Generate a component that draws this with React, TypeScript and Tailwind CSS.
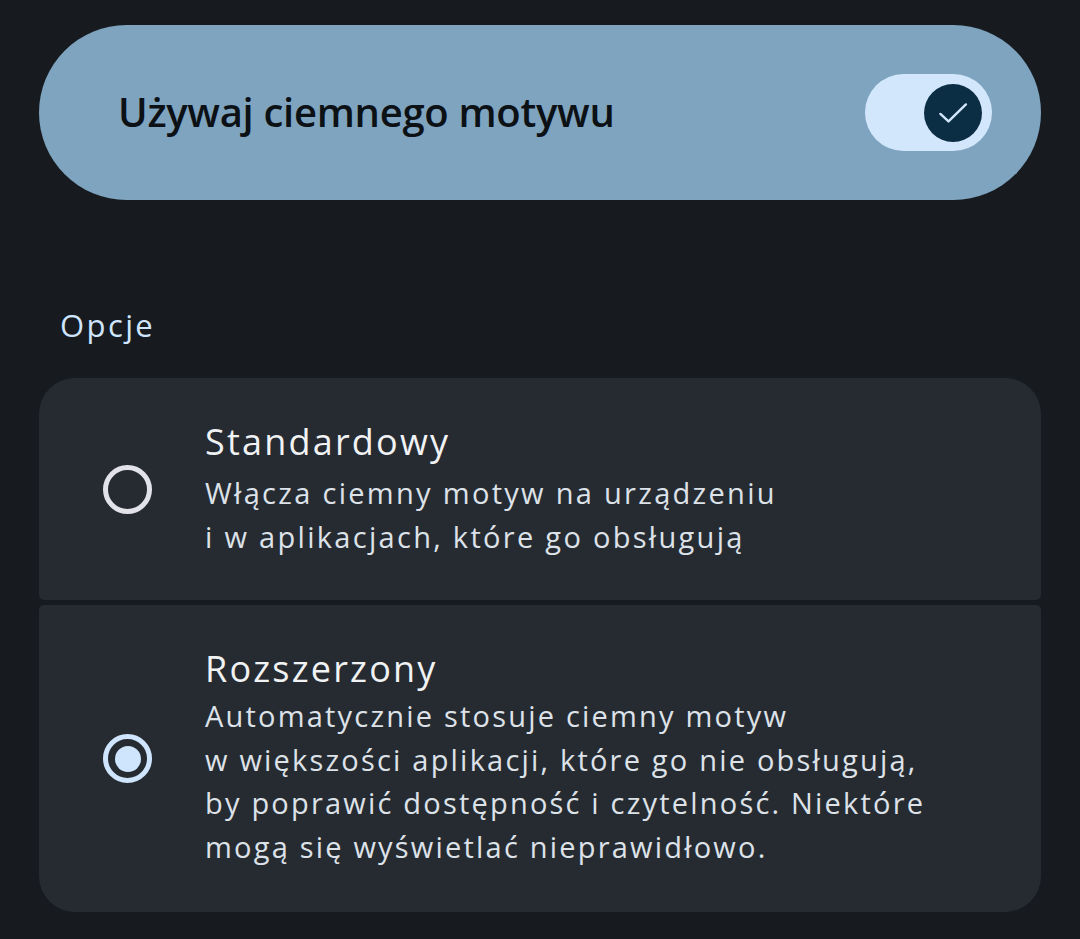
import React from "react";

const font = { fontFamily: '"Open Sans", "Noto Sans", sans-serif' };

function Radio({ checked }: { checked: boolean }) {
  return checked ? (
    <div className="shrink-0 w-[49px] h-[49px] rounded-full border-[5px] border-[#cfe5fd] flex items-center justify-center">
      <div className="w-[26px] h-[26px] rounded-full bg-[#cfe5fd]" />
    </div>
  ) : (
    <div className="shrink-0 w-[49px] h-[49px] rounded-full border-[5px] border-[#e1e3e8]" />
  );
}

export default function App() {
  return (
    <div
      className="w-[1080px] h-[939px] bg-[#171b20] px-[39px] pt-[25px] overflow-hidden"
      style={font}
    >
      <div className="h-[175px] rounded-full bg-[#7fa4bf] flex items-center justify-between pl-[79px] pr-[49px]">
        <span className="text-[40px] font-semibold tracking-[-0.3px] text-[#0c1116] -mt-[1px]">
          Używaj ciemnego motywu
        </span>
        <div className="w-[127px] h-[77px] rounded-full bg-[#d2e7fc] flex items-center justify-end pr-[10px]">
          <div className="w-[58px] h-[58px] rounded-full bg-[#0b2e44] flex items-center justify-center">
            <svg width="36" height="36" viewBox="0 0 24 24" fill="none">
              <path d="M3.6 12.6 L9 17.6 L20.6 6.3" stroke="#d2e7fc" strokeWidth="1.6" strokeLinecap="round" strokeLinejoin="round" />
            </svg>
          </div>
        </div>
      </div>

      <div className="pt-[105px] pl-[21px] text-[31px] tracking-[2.4px] text-[#cfe5fd] leading-[40px]">Opcje</div>

      <div className="mt-[33px] flex flex-col gap-[5px]">
        <div className="h-[222px] bg-[#262b32] rounded-t-[36px] rounded-b-[5px] flex items-center pl-[64px]">
          <Radio checked={false} />
          <div className="ml-[53px]">
            <div className="text-[36px] font-medium tracking-[2.2px] text-[#f1f2f4] leading-[46px]">Standardowy</div>
            <div className="mt-[6px] text-[29px] tracking-[2.3px] text-[#dde2e9] leading-[44px]">
              Włącza ciemny motyw na urządzeniu
              <br />i w aplikacjach, które go obsługują
            </div>
          </div>
        </div>
        <div className="h-[307px] bg-[#262b32] rounded-b-[36px] rounded-t-[5px] flex items-center pl-[64px]">
          <Radio checked={true} />
          <div className="ml-[53px] -mt-[3px]">
            <div className="text-[36px] font-medium tracking-[2.2px] text-[#f1f2f4] leading-[46px]">Rozszerzony</div>
            <div className="mt-[2px] text-[29px] tracking-[2.2px] text-[#dde2e9] leading-[43.5px]">
              Automatycznie stosuje ciemny motyw
              <br />w większości aplikacji, które go nie obsługują,
              <br />by poprawić dostępność i czytelność. Niektóre
              <br />mogą się wyświetlać nieprawidłowo.
            </div>
          </div>
        </div>
      </div>
    </div>
  );
}
